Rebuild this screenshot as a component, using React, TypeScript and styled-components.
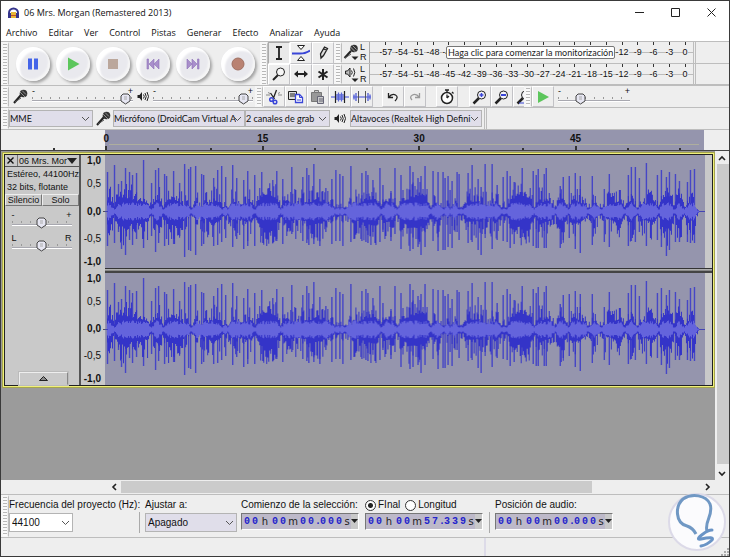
import React from "react";
import styled, { createGlobalStyle, css } from "styled-components";

const Global = createGlobalStyle`
  * { box-sizing: border-box; }
  body { margin: 0; background: #eeeeee; color: #111; font: 10px/12px "Liberation Sans", Arial, sans-serif; }
  button, input, select { font: inherit; color: inherit; margin: 0; padding: 0; border: 0; background: none; }
`;

const uiFont = `Lato, "Noto Sans", sans-serif`;
const chromeFont = `"Open Sans", "Noto Sans", sans-serif`;

/* ---------- window ---------- */

const Window = styled.div`
  display: flex;
  flex-direction: column;
  min-height: 100vh;
  border: 1px solid #3a3a3a;
  background: #eeeeee;
`;
const TitleBar = styled.header`
  display: flex;
  align-items: center;
  height: 23px;
  padding-left: 6px;
  background: #fff;
`;
const Title = styled.h1`
  flex: 1;
  margin: 0 0 0 4px;
  font: 400 9px/14px ${chromeFont};
`;
const WindowButton = styled.button`
  display: grid;
  place-items: center;
  width: 36px;
  height: 22px;
`;
const MenuBar = styled.nav`
  display: flex;
  height: 17px;
  padding-left: 5px;
  gap: 11px;
  background: #fff;
`;
const MenuItem = styled.button`
  font: 400 9px/15px ${chromeFont};
`;

/* ---------- toolbars ---------- */

const edge = "#bdbdbd";

const Dock = styled.div`
  display: flex;
  height: ${(p: { $tall?: boolean }) => (p.$tall ? "44px" : "22px")};
  border-top: 1px solid ${edge};
`;
const Grabber = styled.div`
  flex: none;
  width: 8px;
  border: solid #f6f6f6;
  border-width: 2px 1px 1px 2px;
  border-right: 1px solid ${edge};
  background: repeating-linear-gradient(#b8b8b8 0 1px, #fafafa 1px 3px) content-box;
  padding-right: 1px;
`;
const Transport = styled.div`
  display: flex;
  align-items: center;
  gap: 6px;
  width: 251px;
  padding-left: 7px;
`;
const RoundButton = styled.button<{ $apart?: boolean }>`
  display: grid;
  place-items: center;
  width: 34px;
  height: 34px;
  margin-left: ${(p) => (p.$apart ? "5px" : "0")};
  border-radius: 50%;
  background: #e9e9ee;
  box-shadow: 2px 2px 3px #a2a2a2, inset 4px 4px 2px #fff, inset -2px -2px 2px #f6f6f6;
`;
const ToolGrid = styled.div`
  display: grid;
  grid-template-columns: repeat(3, 22px);
  grid-template-rows: 1fr 1fr;
`;
const ToolButton = styled.button<{ $on?: boolean }>`
  display: grid;
  place-items: center;
  flex: none;
  width: 22px;
  border: 1px solid;
  border-color: #fff #c2c2c6 #c2c2c6 #fff;
  background: #eeeeee;
  ${(p) =>
    p.$on &&
    css`
      border-color: #aaa #fff #fff #aaa;
      background: #e9e9e9;
    `}
`;
const Meters = styled.div`
  flex: 1;
  display: grid;
  grid-template-rows: 1fr 1fr;
`;
const MeterRow = styled.div`
  display: flex;
  border-bottom: 1px solid ${edge};
  min-height: 0;
`;
const MeterButton = styled.button`
  display: grid;
  grid-template-columns: 18px 8px;
  align-items: center;
  width: 27px;
  font-size: 9px;
  line-height: 10px;
  text-align: left;
`;
const Scale = styled.div`
  position: relative;
  flex: 1;
  display: grid;
  grid-template-columns: repeat(20, 1fr);
  padding-left: 8px;
  border-left: 1px solid #aaa;
  background: linear-gradient(#bcbcbc, #bcbcbc) 0 10px / 100% 1px no-repeat;
`;
const ScaleMark = styled.span`
  display: flex;
  flex-direction: column;
  align-items: center;
  &::before {
    content: "";
    width: 1px;
    height: 3px;
    background: #333;
  }
`;
const ScaleText = styled.span`
  margin-top: 2px;
  font-size: 9px;
  line-height: 11px;
  background: #eeeeee;
`;
const Tooltip = styled.div`
  position: absolute;
  left: 76px;
  top: 4px;
  padding: 0 1px;
  border: 1px solid #777;
  border-radius: 2px;
  background: #fff;
  color: #222;
  font: 400 9px/11px ${uiFont};
  white-space: nowrap;
`;
const Tail = styled.div`
  width: 36px;
  border-left: 3px double ${edge};
`;

const IconBox = styled.span<{ $w: number }>`
  display: grid;
  place-items: center;
  flex: none;
  width: ${(p) => p.$w}px;
`;
const ButtonStrip = styled.div<{ $gap?: number }>`
  display: flex;
  margin-left: ${(p) => p.$gap ?? 0}px;
`;
const DeviceStrip = styled(ButtonStrip)`
  align-items: center;
`;
const Clipped = styled.div`
  display: flex;
  width: 11px;
  overflow: hidden;
`;

/* ---------- slider ---------- */

const thumb = `url("data:image/svg+xml,%3Csvg xmlns='http://www.w3.org/2000/svg' width='11' height='12'%3E%3Cpath d='M3 1h5l2 2v5L5.500 11 1 8V3z' fill='%23e6e6f2' stroke='%23444'/%3E%3Cpath d='M4 4h3M4 6h3' stroke='%23aaa'/%3E%3C/svg%3E")`;

const SliderBox = styled.label<{ $w: number }>`
  display: grid;
  grid-template-columns: 1fr 1fr;
  grid-template-rows: 5px 13px;
  align-content: center;
  width: ${(p) => p.$w}px;
`;
const SliderEnd = styled.span<{ $right?: boolean }>`
  font-size: 9px;
  line-height: 6px;
  text-align: ${(p) => (p.$right ? "right" : "left")};
`;
const Range = styled.input`
  grid-column: 1 / -1;
  width: 100%;
  height: 12px;
  appearance: none;
  background: linear-gradient(#a8a8b0, #a8a8b0) 0 7px / 100% 1px no-repeat,
    linear-gradient(#fff, #fff) 0 8px / 100% 1px no-repeat,
    repeating-linear-gradient(90deg, #999 0 1px, transparent 1px 9px) 0 4px / 100% 2px no-repeat;
  &::-webkit-slider-thumb {
    appearance: none;
    width: 11px;
    height: 12px;
    background: ${thumb};
  }
`;
const Slider = ({ w, value, name, ends = ["-", "+"] }: { w: number; value: number; name: string; ends?: string[] }) => (
  <SliderBox $w={w}>
    <SliderEnd>{ends[0]}</SliderEnd>
    <SliderEnd $right>{ends[1]}</SliderEnd>
    <Range type="range" defaultValue={value} aria-label={name} />
  </SliderBox>
);

/* ---------- select ---------- */

const SelectBox = styled.span<{ $w: number; $white?: boolean; $h?: number }>`
  display: grid;
  grid-template-columns: 1fr 11px;
  align-items: center;
  flex: none;
  width: ${(p) => p.$w}px;
  height: ${(p) => p.$h ?? 18}px;
  border: 1px solid #b4b4b4;
  background: ${(p) => (p.$white ? "#fff" : "#e0deea")};
`;
const NativeSelect = styled.select<{ $ui?: boolean }>`
  grid-area: 1 / 1 / 2 / 3;
  width: 100%;
  height: 100%;
  padding: 0 8px 0 ${(p) => (p.$ui ? 0 : 2)}px;
  appearance: none;
  ${(p) =>
    p.$ui &&
    css`
      font: 400 9px/14px ${uiFont};
    `}
`;
const Chevron = styled.svg`
  grid-area: 1 / 2;
  pointer-events: none;
`;
const Select = ({ w, h, text, name, white, ui, id }: { w: number; h?: number; text: string; name: string; white?: boolean; ui?: boolean; id?: string }) => (
  <SelectBox $w={w} $h={h} $white={white}>
    <NativeSelect aria-label={name} $ui={ui} id={id}>
      <option>{text}</option>
    </NativeSelect>
    <Chevron width="9" height="8" viewBox="0 0 9 8" fill="none" stroke="#555">
      <path d="M1 2l3.500 3.500L8 2" />
    </Chevron>
  </SelectBox>
);

/* ---------- timeline and track ---------- */

const Timeline = styled.div`
  position: relative;
  display: grid;
  grid-template-columns: repeat(13, 1fr);
  height: 22px;
  padding: 2px 23px 0 27px;
  border-top: 1px solid #bdbdbd;
  border-bottom: 1px solid #444;
  background: linear-gradient(90deg, #eeeeee 104px, #9595ad 104px calc(100% - 25px), #eeeeee 0);
  &::after {
    content: "";
    position: absolute;
    left: 108px;
    right: 30px;
    top: 14px;
    height: 1px;
    background: #aeae9e;
  }
`;
const Tick = styled.span<{ $major: boolean }>`
  display: flex;
  flex-direction: column;
  align-items: center;
  justify-content: flex-end;
  font-weight: 700;
  font-size: 10px;
  &::after {
    content: "";
    width: 2px;
    height: ${(p) => (p.$major ? 4 : 2)}px;
    margin-top: 1px;
    background: #333;
  }
`;
const Workspace = styled.main`
  flex: 1;
  display: grid;
  grid-template-columns: minmax(0, 1fr) 14px;
  grid-template-rows: 1fr 14px;
  background: #9b9b9b;
`;
const TrackArea = styled.div`
  grid-area: 1 / 1;
  padding: 1px 1px 0 1px;
`;
const TrackFrame = styled.section`
  display: grid;
  grid-template-columns: 76px 24px minmax(0, 1fr);
  border: 1px solid #222;
  outline: 1px solid #f0f07a;
  box-shadow: 0 0 0 2px #a5a54c;
  margin: 2px 1px 0 2px;
  background: #c9c9c9;
`;
const Panel = styled.div`
  display: flex;
  flex-direction: column;
  border-right: 2px solid #555;
`;
const PanelHead = styled.div`
  display: flex;
  height: 12px;
  border-bottom: 1px solid #555;
`;
const CloseTrack = styled.button`
  display: grid;
  place-items: center;
  width: 13px;
  border-right: 1px solid #777;
`;
const TrackName = styled.button`
  display: flex;
  flex: 1;
  align-items: center;
  justify-content: space-between;
  padding: 0 2px 0 1px;
  font-size: 9px;
  white-space: nowrap;
`;
const Info = styled.p`
  margin: 0;
  padding: 1px 2px 0;
  font-size: 9px;
  line-height: 13px;
  white-space: nowrap;
`;
const PairRow = styled.div`
  display: grid;
  grid-template-columns: 1fr 1fr;
  margin: 0 0 3px;
`;
const PairButton = styled.button`
  height: 12px;
  border: 1px solid;
  border-color: #eee #777 #777 #eee;
  font-size: 9px;
  line-height: 10px;
`;
const PanelSlider = styled.div`
  display: flex;
  justify-content: center;
  height: 23px;
  margin-right: 1px;
`;
const CollapseButton = styled.button`
  display: grid;
  place-items: center;
  width: 49px;
  height: 13px;
  margin: auto auto 0 14px;
  border: 1px solid;
  border-color: #eee #888 transparent #eee;
  outline: 1px solid #bbb;
`;
const Stack = styled.div`
  display: grid;
  grid-template-rows: 113px 112px;
  gap: 5px;
`;
const Levels = styled.div`
  display: grid;
  grid-template-rows: 12px 1fr 21px 1fr 12px;
  align-items: center;
  justify-items: end;
  padding-right: 4px;
  background: linear-gradient(90deg, transparent 22px, #555 22px) 0 56px / 24px 1px no-repeat;
`;
const Level = styled.span<{ $bold: boolean }>`
  font-size: 10px;
  font-weight: ${(p) => (p.$bold ? 700 : 400)};
`;
const WaveStack = styled(Stack)`
  background: linear-gradient(#333 0 1px, #b0b0b0 1px 2px, #888 2px 3px, #444 3px 5px) 0 113px / 100% 5px no-repeat;
`;
const WaveLane = styled.div`
  margin-right: 7px;
  overflow: hidden;
  background: #9595ad;
`;
const Wave = styled.svg`
  display: block;
  width: 100%;
  height: 113px;
`;

const VScroll = styled.div`
  display: grid;
  grid-template-rows: 13px 1fr 20px 10px;
  place-items: center;
  background: #eeeeee;
  grid-area: 1 / 2 / 3 / 3;
`;
const VThumb = styled.div`
  justify-self: stretch;
  align-self: stretch;
  margin-left: 2px;
  background: #cbcbcb;
`;
const HScroll = styled.div`
  grid-area: 2 / 1;
  display: grid;
  grid-template-columns: 106px 14px 1fr 123px;
  align-items: center;
  background: #eeeeee;
`;
const HThumb = styled.div`
  height: 12px;
  background: #cbcbcb;
`;
const ArrowButton = styled.button<{ $end?: boolean }>`
  display: grid;
  place-items: center;
  width: 14px;
  height: 12px;
  justify-self: ${(p) => (p.$end ? "end" : "center")};
`;

/* ---------- selection bar ---------- */

const SelectionBar = styled.footer`
  display: flex;
  height: 44px;
  border: solid ${edge};
  border-width: 1px 0;
`;
const Field = styled.div<{ $w: number }>`
  display: flex;
  flex-direction: column;
  gap: 2px;
  width: ${(p) => p.$w}px;
  padding-top: 4px;
  white-space: nowrap;
`;
const FieldLabel = styled.label`
  display: flex;
  align-items: center;
  height: 12px;
`;
const Radios = styled.div`
  display: flex;
  gap: 5px;
  padding-left: 0;
`;
const Radio = styled.input`
  width: 11px;
  height: 11px;
  margin-right: 2px;
  appearance: none;
  border: 1px solid #333;
  border-radius: 50%;
  background: #fff;
  &:checked {
    background: radial-gradient(#222 0 2px, #fff 3px);
  }
`;
const Divider = styled.div`
  width: 2px;
  height: 21px;
  margin: 17px 4px 0 4px;
  border-left: 1px solid #aaa;
`;
const TimeBox = styled.div`
  display: flex;
  align-items: center;
  width: 118px;
  height: 17px;
  padding-left: 1px;
  border: 1px solid;
  border-color: #777 #fff #fff #777;
  background: #bdb9c9;
`;
const Cell = styled.span<{ $w: number; $digit?: boolean }>`
  width: ${(p) => p.$w}px;
  text-align: center;
  font: ${(p) => (p.$digit ? 700 : 400)} 10px/14px
    ${(p) => (p.$digit ? `"Liberation Mono", monospace` : `"DejaVu Sans", sans-serif`)};
  color: ${(p) => (p.$digit ? "#2424cc" : "#222")};
`;
const TimeDrop = styled.button`
  display: grid;
  place-items: center;
  width: 7px;
  height: 15px;
  margin-left: auto;
  background: #c9c9c9;
`;
const Time = ({ value }: { value: string }) => (
  <TimeBox>
    {[...value].map((c, i) =>
      c === " " ? null : (
        <Cell key={i} $digit={/[\d.]/.test(c)} $w={c === "." ? 4 : c === "m" ? 12 : c === "h" ? 12 : 8}>
          {c}
        </Cell>
      )
    )}
    <TimeDrop aria-label="Formato">
      <svg width="7" height="5" viewBox="0 0 7 5">
        <path d="M0 0h7L3.500 4z" fill="#222" />
      </svg>
    </TimeDrop>
  </TimeBox>
);
const StatusBar = styled.div`
  display: grid;
  grid-template-columns: 2fr 1fr;
  height: 18px;
`;
const StatusCell = styled.div`
  display: flex;
  align-items: flex-end;
  justify-content: flex-end;
  border-right: 2px solid #dddbe8;
  &:last-child {
    border: 0;
  }
`;
const Watermark = styled.svg`
  position: absolute;
  right: 3px;
  bottom: 5px;
`;

/* ---------- icons ---------- */

const Mic = ({ s = 15 }: { s?: number }) => (
  <svg width={s} height={s} viewBox="0 0 15 15">
    <path d="M1 14L8 6" stroke="#222" strokeWidth="2" />
    <path d="M2 13l6-4" stroke="#555" />
    <circle cx="10.500" cy="4.500" r="3.800" fill="#333" />
    <path d="M7 3l5 5M9 1.500l4 4" stroke="#aaa" strokeWidth=".8" />
  </svg>
);
const Speaker = () => (
  <svg width="12" height="11" viewBox="0 0 12 11" fill="none" stroke="#222">
    <path d="M.5 4h2L5 1v9L2.500 7h-2z" fill="#222" stroke="none" />
    <path d="M6.500 3.500q1.500 2 0 4M8 2q2.500 3.500 0 7M10 1q3 4.500 0 9" />
  </svg>
);
const MeterMic = () => (
  <svg width="18" height="20" viewBox="0 0 18 20">
    <path d="M2.500 16L9 9" stroke="#222" strokeWidth="2" />
    <path d="M3 16l6-4" stroke="#555" />
    <circle cx="12" cy="6.500" r="3.800" fill="#333" />
    <path d="M8.500 5l5 5M10.500 3.500l4 4" stroke="#bbb" strokeWidth=".8" />
    <path d="M9.500 14.500h7L13 18z" fill="#222" />
  </svg>
);
const MeterSpeaker = () => (
  <svg width="18" height="20" viewBox="0 0 18 20" fill="none" stroke="#222">
    <path d="M3.500 7h2L8 4v9l-2.500-3h-2z" fill="#bbb" />
    <path d="M9.500 6.500q1.500 2 0 4M11.500 4.500q2.500 4 0 8" />
    <path d="M9.500 14.500h7L13 18z" fill="#222" stroke="none" />
  </svg>
);
const Svg = ({ children, s = 18 }: { children: React.ReactNode; s?: number }) => (
  <svg width={s} height={s} viewBox="0 0 18 18" fill="none" stroke="#222">
    {children}
  </svg>
);
const Lens = ({ children }: { children?: React.ReactNode }) => (
  <Svg>
    <path d="M2.500 15.500L8 10" strokeWidth="2.500" />
    <circle cx="10.500" cy="7" r="4" fill="#f4f4f8" />
    {children}
  </Svg>
);

const tools = [
  { n: "Selección", i: <Svg><path d="M6 3h6M6 15h6M9 3v12" strokeWidth="1.800" /></Svg> },
  {
    n: "Envolvente",
    i: (
      <Svg>
        <path d="M5.500 1.500h7l-3.500 4zM5.500 16.500h7l-3.500-4z" fill="#fff" />
        <path d="M0 9.500h8q6 0 10-3" stroke="#3a46d8" strokeWidth="2" />
      </Svg>
    ),
  },
  { n: "Dibujo", i: <Svg><path d="M7 14l-.5-4 4-7 3 1.500-4 7zM7 14l2.500-2.500M10 5l3 1.500" fill="#ddd" strokeWidth="1.300" /></Svg> },
  {
    n: "Ampliación",
    i: (
      <Svg>
        <path d="M3 15l5-5" strokeWidth="2" />
        <circle cx="10.500" cy="7" r="4" fill="#f6f6f6" />
      </Svg>
    ),
  },
  { n: "Desplazamiento", i: <Svg><path d="M4 9h10" strokeWidth="2" /><path d="M2 9l4-3.500v7zM16 9l-4-3.500v7z" fill="#222" stroke="none" /></Svg> },
  { n: "Multiherramienta", i: <Svg><path d="M9 4v11M4.500 6.500l9 6M13.500 6.500l-9 6" strokeWidth="2" /></Svg> },
];

const edits = [
  {
    n: "Cortar",
    i: (
      <Svg>
        <path d="M1 7h4M13 7h4M3 4.500l2 1M15 4.500l-2 1" stroke="#888" />
        <path d="M11.500 2L8.500 10M5.500 5l4 6" strokeWidth="1.300" />
        <circle cx="6.500" cy="11.500" r="1.800" stroke="#3a46d8" strokeWidth="1.500" />
        <circle cx="10" cy="14" r="1.800" stroke="#3a46d8" strokeWidth="1.500" />
      </Svg>
    ),
  },
  {
    n: "Copiar",
    i: (
      <Svg>
        <path d="M1.500 3.500h8v8h-8zM3 6h5M3 8h5" fill="#ddd" />
        <path d="M8.500 6.500h4l3 3v5h-7z" fill="#fff" stroke="#3a46d8" strokeWidth="1.300" />
        <path d="M12.500 6.500v3h3M10 12h4" stroke="#3a46d8" />
      </Svg>
    ),
  },
  {
    n: "Pegar",
    i: (
      <Svg>
        <path d="M2.500 4.500h10v9h-10z" fill="#999" stroke="#777" />
        <path d="M5.500 2.500h4v2h-4z" fill="#ccc" stroke="#777" />
        <path d="M8.500 8.500h6v7h-6zM10 11h4M10 13h4" fill="#ccc" stroke="#667" />
      </Svg>
    ),
  },
  {
    n: "Recortar",
    i: (
      <Svg>
        <path d="M0 9h4M14 9h4" stroke="#3a46d8" />
        <path d="M6 6v6M7.500 4.500v9M9 6v6M10.500 4.500v9M12 6v6" stroke="#5a66d8" strokeWidth="1.300" />
        <path d="M4.500 3v12M13.500 3v12" strokeWidth="1.200" />
      </Svg>
    ),
  },
  {
    n: "Silenciar",
    i: (
      <Svg>
        <path d="M0 9h18" stroke="#3a46d8" />
        <path d="M1 6.500v5M3 5v8M15 5v8M17 6.500v5" stroke="#5a66d8" strokeWidth="1.400" />
        <path d="M5.500 3v12M12.500 3v12" stroke="#555" />
      </Svg>
    ),
  },
];

const Undo = ({ redo }: { redo?: boolean }) => (
  <svg width="18" height="18" viewBox="0 0 18 18" fill="none" stroke={redo ? "#999" : "#222"} strokeWidth="1.300">
    {redo ? <path d="M13.500 5v4.500h-4.500M13.500 9.500Q10 5 6.500 7T6 12" /> : <path d="M4.500 5v4.500H9M4.500 9.500Q8 5 11.500 7T11 13" />}
  </svg>
);

const Chev = ({ d }: { d: string }) => (
  <svg width="8" height="8" viewBox="0 0 8 8" fill="none" stroke="#222" strokeWidth="1.600">
    <path d={d} />
  </svg>
);

const transport = [
  { n: "Pausa", i: <path d="M4 3.500h4v11H4zM10 3.500h4v11h-4z" fill="#4464e8" /> },
  { n: "Reproducir", i: <path d="M4 2.500v13L15.500 9z" fill="#5cc65c" /> },
  { n: "Detener", i: <path d="M4 4h10v10H4z" fill="#bba79c" /> },
  { n: "Inicio", i: <path d="M3 4h1.500v10H3zM10 4v10L5 9zM15 4v10l-5-5z" fill="#a98fcb" stroke="#8d70b8" strokeWidth=".6" /> },
  { n: "Fin", i: <path d="M13.500 4H15v10h-1.500zM8 4v10l5-5zM3 4v10l5-5z" fill="#a98fcb" stroke="#8d70b8" strokeWidth=".6" /> },
  { n: "Grabar", i: <circle cx="9" cy="9" r="6" fill="#b98272" stroke="#a07062" /> },
];

/* ---------- waveform data: x, height above zero, depth below zero ---------- */

const spikes: number[][] = [
  [3, 39, 34], [10, 46, 31], [14, 27, 20], [17, 30, 37], [21, 43, 43], [25, 39, 28], [28, 36, 33], [32, 38, 27], [39, 51, 36],
  [47, 28, 24], [51, 41, 40], [54, 43, 31], [60, 37, 34], [62, 35, 27], [69, 40, 32], [75, 28, 24], [80, 47, 45], [84, 42, 38],
  [86, 44, 39], [91, 45, 43], [97, 37, 34], [99, 36, 32], [109, 33, 34], [113, 41, 33], [117, 45, 30], [121, 34, 26], [128, 46, 35],
  [132, 33, 27], [139, 31, 37], [143, 40, 34], [150, 36, 34],
  [157, 39, 24], [168, 31, 31], [172, 40, 29], [178, 32, 32], [187, 44, 22], [198, 34, 29], [202, 43, 31], [204, 36, 33],
  [209, 47, 32], [215, 32, 34], [221, 23, 20], [227, 32, 32], [231, 41, 29], [235, 37, 29], [238, 35, 34], [246, 45, 30],
  [257, 38, 29], [261, 40, 30], [263, 36, 31], [268, 31, 20], [275, 43, 30], [278, 26, 20], [286, 20, 29], [290, 43, 22],
  [296, 36, 37], [305, 45, 39], [308, 39, 37], [313, 33, 35], [316, 35, 43], [320, 45, 35], [328, 40, 29], [333, 39, 39],
  [338, 39, 38], [340, 33, 38], [343, 35, 35], [345, 21, 22], [347, 30, 36], [352, 39, 20], [354, 37, 28], [363, 38, 31],
  [367, 46, 30], [373, 32, 38], [376, 24, 43], [380, 47, 22], [387, 47, 37], [392, 26, 28], [398, 34, 29], [402, 40, 30],
  [405, 35, 36], [409, 29, 32], [417, 43, 25], [428, 40, 34], [431, 36, 36], [433, 42, 36],
  [439, 37, 36], [441, 43, 36], [455, 25, 36], [458, 34, 28],
  [464, 35, 26], [470, 38, 37], [475, 35, 41], [487, 35, 33], [499, 22, 30],
  [504, 37, 35], [523, 36, 34], [526, 44, 29], [530, 44, 30], [534, 33, 20], [541, 48, 34], [552, 36, 28], [556, 41, 35],
  [561, 34, 44], [564, 39, 38], [570, 37, 30], [574, 30, 30], [582, 29, 30], [585, 41, 31], [589, 42, 31],
];
const quiet = [9, 46, 58, 86, 117, 122, 149, 175, 229, 234, 239, 275, 291, 325, 338, 344, 353, 357, 396, 400, 428, 449, 462, 482, 495, 519, 531, 552, 568, 578, 592];

const noise = (n: number) => {
  const v = Math.sin(n * 127.1 + 11.7) * 43758.5453;
  return v - Math.floor(v);
};

function build() {
  const top: string[] = [];
  const low: string[] = [];
  const rmsTop: string[] = [];
  const rmsLow: string[] = [];
  const mid = 56.5;
  for (let x = 2; x <= 592; x++) {
    const near = Math.min(...quiet.map((q) => Math.abs(q - x)));
    const env = Math.min(1, 0.25 + near / 6);
    const tail = Math.min(1, (594 - x) / 6);
    const swell = 9 + 3 * Math.sin(x / 8) + 3 * Math.sin(x / 21);
    const up = tail * Math.max(4, env * (swell + noise(x + 3) ** 2 * 16));
    const down = tail * Math.max(4, env * (swell + 1 + noise(x * 3 + 3) ** 2 * 21));
    const r = tail * Math.max(2, env * (5 + noise(x * 7 + 3) * 4));
    top.push(`${x} ${(mid - up).toFixed(1)}H${x + 1}`);
    low.push(`${x + 1} ${(mid + down).toFixed(1)}H${x}`);
    rmsTop.push(`${x} ${(mid - Math.min(r, up)).toFixed(1)}H${x + 1}`);
    rmsLow.push(`${x + 1} ${(mid + Math.min(r, down)).toFixed(1)}H${x}`);
  }
  return {
    peak: `M${top.join("L")}L${low.reverse().join("L")}Z`,
    rms: `M${rmsTop.join("L")}L${rmsLow.reverse().join("L")}Z`,
  };
}
const wave = build();
const spikePath = spikes.map(([x, u, d]) => `M${x - 0.5} ${56 - u}V${57 + d}`).join("");

const Channel = () => (
  <WaveLane>
    <Wave viewBox="0 0 599 113" preserveAspectRatio="none" role="img" aria-label="Forma de onda">
      <path d={spikePath} stroke="#4646c6" strokeWidth="1.400" />
      <path d={wave.peak} fill="#3434c8" />
      <path d={wave.rms} fill="#6464dc" />
      <path d="M0 56.500H3M593 56.500H599" stroke="#4444b4" />
    </Wave>
  </WaveLane>
);

const db = Array.from({ length: 20 }, (_, i) => String(-57 + i * 3));
const levels = ["1,0", "0,5", "0,0", "-0,5", "-1,0"];

export default function App() {
  return (
    <Window>
      <Global />
      <TitleBar>
        <svg width="13" height="12" viewBox="0 0 13 12">
          <path d="M2 8V6a4.500 4.500 0 0 1 9 0v2" fill="none" stroke="#34348c" strokeWidth="2" />
          <path d="M4 5h5v6H4z" fill="#e8b838" />
          <path d="M4 8h5v1H4z" fill="#c4502c" />
          <path d="M1 6h3v5H1zM9 6h3v5H9z" fill="#34348c" />
        </svg>
        <Title>06 Mrs. Morgan (Remastered 2013)</Title>
        <WindowButton aria-label="Minimizar">
          <svg width="9" height="9" stroke="#222"><path d="M0 4.500h9" /></svg>
        </WindowButton>
        <WindowButton aria-label="Maximizar">
          <svg width="9" height="9" stroke="#222" fill="none"><path d="M.5.5h8v8h-8z" /></svg>
        </WindowButton>
        <WindowButton aria-label="Cerrar">
          <svg width="9" height="9" stroke="#222"><path d="M.5.5l8 8M8.500.5l-8 8" /></svg>
        </WindowButton>
      </TitleBar>
      <MenuBar>
        {["Archivo", "Editar", "Ver", "Control", "Pistas", "Generar", "Efecto", "Analizar", "Ayuda"].map((m) => (
          <MenuItem key={m}>{m}</MenuItem>
        ))}
      </MenuBar>

      <Dock $tall>
        <Grabber />
        <Transport>
          {transport.map((t) => (
            <RoundButton key={t.n} aria-label={t.n} $apart={t.n === "Grabar"}>
              <svg width="18" height="18" viewBox="0 0 18 18">{t.i}</svg>
            </RoundButton>
          ))}
        </Transport>
        <Grabber />
        <ToolGrid>
          {tools.map((t, i) => (
            <ToolButton key={t.n} aria-label={t.n} $on={i === 0}>{t.i}</ToolButton>
          ))}
        </ToolGrid>
        <Meters>
          {[<MeterMic key="m" />, <MeterSpeaker key="s" />].map((icon, row) => (
            <MeterRow key={row}>
              <Grabber />
              <MeterButton aria-label={row ? "Nivel de reproducción" : "Nivel de grabación"}>
                {icon}
                <span>L<br />R</span>
              </MeterButton>
              <Scale>
                {db.map((d) => (
                  <ScaleMark key={d}><ScaleText>{d}</ScaleText></ScaleMark>
                ))}
                {row === 0 && <Tooltip role="tooltip">Haga clic para comenzar la monitorización</Tooltip>}
              </Scale>
              <Tail />
            </MeterRow>
          ))}
        </Meters>
      </Dock>

      <Dock>
        <Grabber />
        <IconBox $w={23}><Mic /></IconBox>
        <Slider w={101} value={98} name="Volumen de grabación" />
        <IconBox $w={20}><Speaker /></IconBox>
        <Slider w={100} value={96} name="Volumen de reproducción" />
        <ButtonStrip $gap={2}>
          <Grabber />
          {edits.map((t) => (
            <ToolButton key={t.n} aria-label={t.n}>{t.i}</ToolButton>
          ))}
        </ButtonStrip>
        <ButtonStrip $gap={9}>
          <ToolButton aria-label="Deshacer"><Undo /></ToolButton>
          <ToolButton aria-label="Rehacer"><Undo redo /></ToolButton>
        </ButtonStrip>
        <ButtonStrip $gap={10}>
          <ToolButton aria-label="Bloqueo de sincronización">
            <Svg>
              <circle cx="9" cy="10" r="5.500" fill="#fff" strokeWidth="1.500" />
              <path d="M9 10V6.500M9 10l2-2M7 2h4M9 2v3M14 4l1.500 1.500" strokeWidth="1.300" />
            </Svg>
          </ToolButton>
        </ButtonStrip>
        <ButtonStrip $gap={11}>
          <ToolButton aria-label="Acercar"><Lens><path d="M8.500 7h4M10.500 5v4" stroke="#3a46d8" strokeWidth="1.500" /></Lens></ToolButton>
          <ToolButton aria-label="Alejar"><Lens><path d="M8 7h5" stroke="#3a46d8" strokeWidth="2" /></Lens></ToolButton>
          <Clipped>
            <ToolButton aria-label="Ajustar selección"><Lens><path d="M4 15h6" stroke="#3a46d8" /></Lens></ToolButton>
          </Clipped>
          <Grabber />
          <ToolButton aria-label="Reproducir a velocidad">
            <Svg><path d="M4 3v12l11-6z" fill="#5cc65c" stroke="none" /></Svg>
          </ToolButton>
        </ButtonStrip>
        <ButtonStrip $gap={4}>
          <Slider w={72} value={28} name="Velocidad" />
        </ButtonStrip>
      </Dock>

      <Dock>
        <Grabber />
        <DeviceStrip>
          <Select w={84} h={17} text="MME" name="Sistema de audio" ui />
          <IconBox $w={20}><Mic /></IconBox>
          <Select w={132} h={17} text="Micrófono (DroidCam Virtual A" name="Dispositivo de grabación" ui />
          <Select w={85} h={17} text="2 canales de grab" name="Canales" ui />
          <IconBox $w={20}><Speaker /></IconBox>
          <Select w={132} h={17} text="Altavoces (Realtek High Defini" name="Dispositivo de reproducción" ui />
        </DeviceStrip>
        <ButtonStrip $gap={2}><Tail /></ButtonStrip>
      </Dock>

      <Timeline>
        {Array.from({ length: 13 }, (_, i) => (
          <Tick key={i} $major={i % 3 === 1}>{i % 3 === 1 ? (i - 1) * 5 : ""}</Tick>
        ))}
      </Timeline>

      <Workspace>
        <TrackArea>
          <TrackFrame>
            <Panel>
              <PanelHead>
                <CloseTrack aria-label="Cerrar pista">
                  <svg width="7" height="7" stroke="#111" strokeWidth="1.400"><path d="M.5.5l6 6M6.500.5l-6 6" /></svg>
                </CloseTrack>
                <TrackName>
                  06 Mrs. Mor
                  <svg width="10" height="6"><path d="M0 0h10L5 6z" fill="#222" /></svg>
                </TrackName>
              </PanelHead>
              <Info>Estéreo, 44100Hz<br />32 bits, flotante</Info>
              <PairRow>
                <PairButton>Silencio</PairButton>
                <PairButton>Solo</PairButton>
              </PairRow>
              <PanelSlider><Slider w={60} value={50} name="Ganancia" /></PanelSlider>
              <PanelSlider><Slider w={60} value={50} name="Balance" ends={["L", "R"]} /></PanelSlider>
              <CollapseButton aria-label="Contraer">
                <svg width="9" height="5"><path d="M.5 4.500h8L4.500.5z" fill="#888" stroke="#222" /></svg>
              </CollapseButton>
            </Panel>
            <Stack>
              {[0, 1].map((c) => (
                <Levels key={c}>
                  {levels.map((l, i) => (
                    <Level key={l} $bold={i % 2 === 0}>{l}</Level>
                  ))}
                </Levels>
              ))}
            </Stack>
            <WaveStack>
              <Channel />
              <Channel />
            </WaveStack>
          </TrackFrame>
        </TrackArea>
        <VScroll>
          <ArrowButton aria-label="Arriba"><Chev d="M1 6l3-3 3 3" /></ArrowButton>
          <VThumb />
          <ArrowButton aria-label="Abajo"><Chev d="M1 2l3 3 3-3" /></ArrowButton>
        </VScroll>
        <HScroll>
          <span />
          <ArrowButton aria-label="Izquierda"><Chev d="M6 1L3 4l3 3" /></ArrowButton>
          <HThumb />
          <ArrowButton $end aria-label="Derecha"><Chev d="M2 1l3 3-3 3" /></ArrowButton>
        </HScroll>
      </Workspace>

      <SelectionBar>
        <Grabber />
        <Field $w={126}>
          <FieldLabel htmlFor="rate">Frecuencia del proyecto (Hz):</FieldLabel>
          <Select w={64} h={19} white text="44100" name="Frecuencia" id="rate" />
        </Field>
        <Divider />
        <Field $w={96}>
          <FieldLabel htmlFor="snap">Ajustar a:</FieldLabel>
          <Select w={92} h={19} text="Apagado" name="Ajustar a" id="snap" />
        </Field>
        <Field $w={124}>
          <FieldLabel as="span">Comienzo de la selección:</FieldLabel>
          <Time value="00 h 00 m 00.000 s" />
        </Field>
        <Field $w={120}>
          <Radios>
            <FieldLabel><Radio type="radio" name="end" defaultChecked />FInal</FieldLabel>
            <FieldLabel><Radio type="radio" name="end" />Longitud</FieldLabel>
          </Radios>
          <Time value="00 h 00 m 57.339 s" />
        </Field>
        <Divider />
        <Field $w={120}>
          <FieldLabel as="span">Posición de audio:</FieldLabel>
          <Time value="00 h 00 m 00.000 s" />
        </Field>
      </SelectionBar>
      <StatusBar>
        <StatusCell />
        <StatusCell>
          <svg width="8" height="8" fill="#aaa"><path d="M6 0h2v2H6zM3 3h2v2H3zM6 3h2v2H6zM0 6h2v2H0zM3 6h2v2H3zM6 6h2v2H6z" /></svg>
        </StatusCell>
      </StatusBar>
      <Watermark width="60" height="60" viewBox="0 0 60 60" fill="none">
        <circle cx="30" cy="30" r="28" fill="#fbfbfd" stroke="#dcdae8" strokeWidth="2" />
        <path d="M29 42Q26 36 20 34C8 31 8 14 16 7c9-6 23-4 27 5c4 11-6 17-3 27" stroke="#7098c4" strokeWidth="3" />
        <path d="M45 38q-4 0-9 4-8 6-2 5 14-3 11 1-5 5-11 6" stroke="#6a94c6" strokeWidth="3" strokeLinecap="round" />
      </Watermark>
    </Window>
  );
}
